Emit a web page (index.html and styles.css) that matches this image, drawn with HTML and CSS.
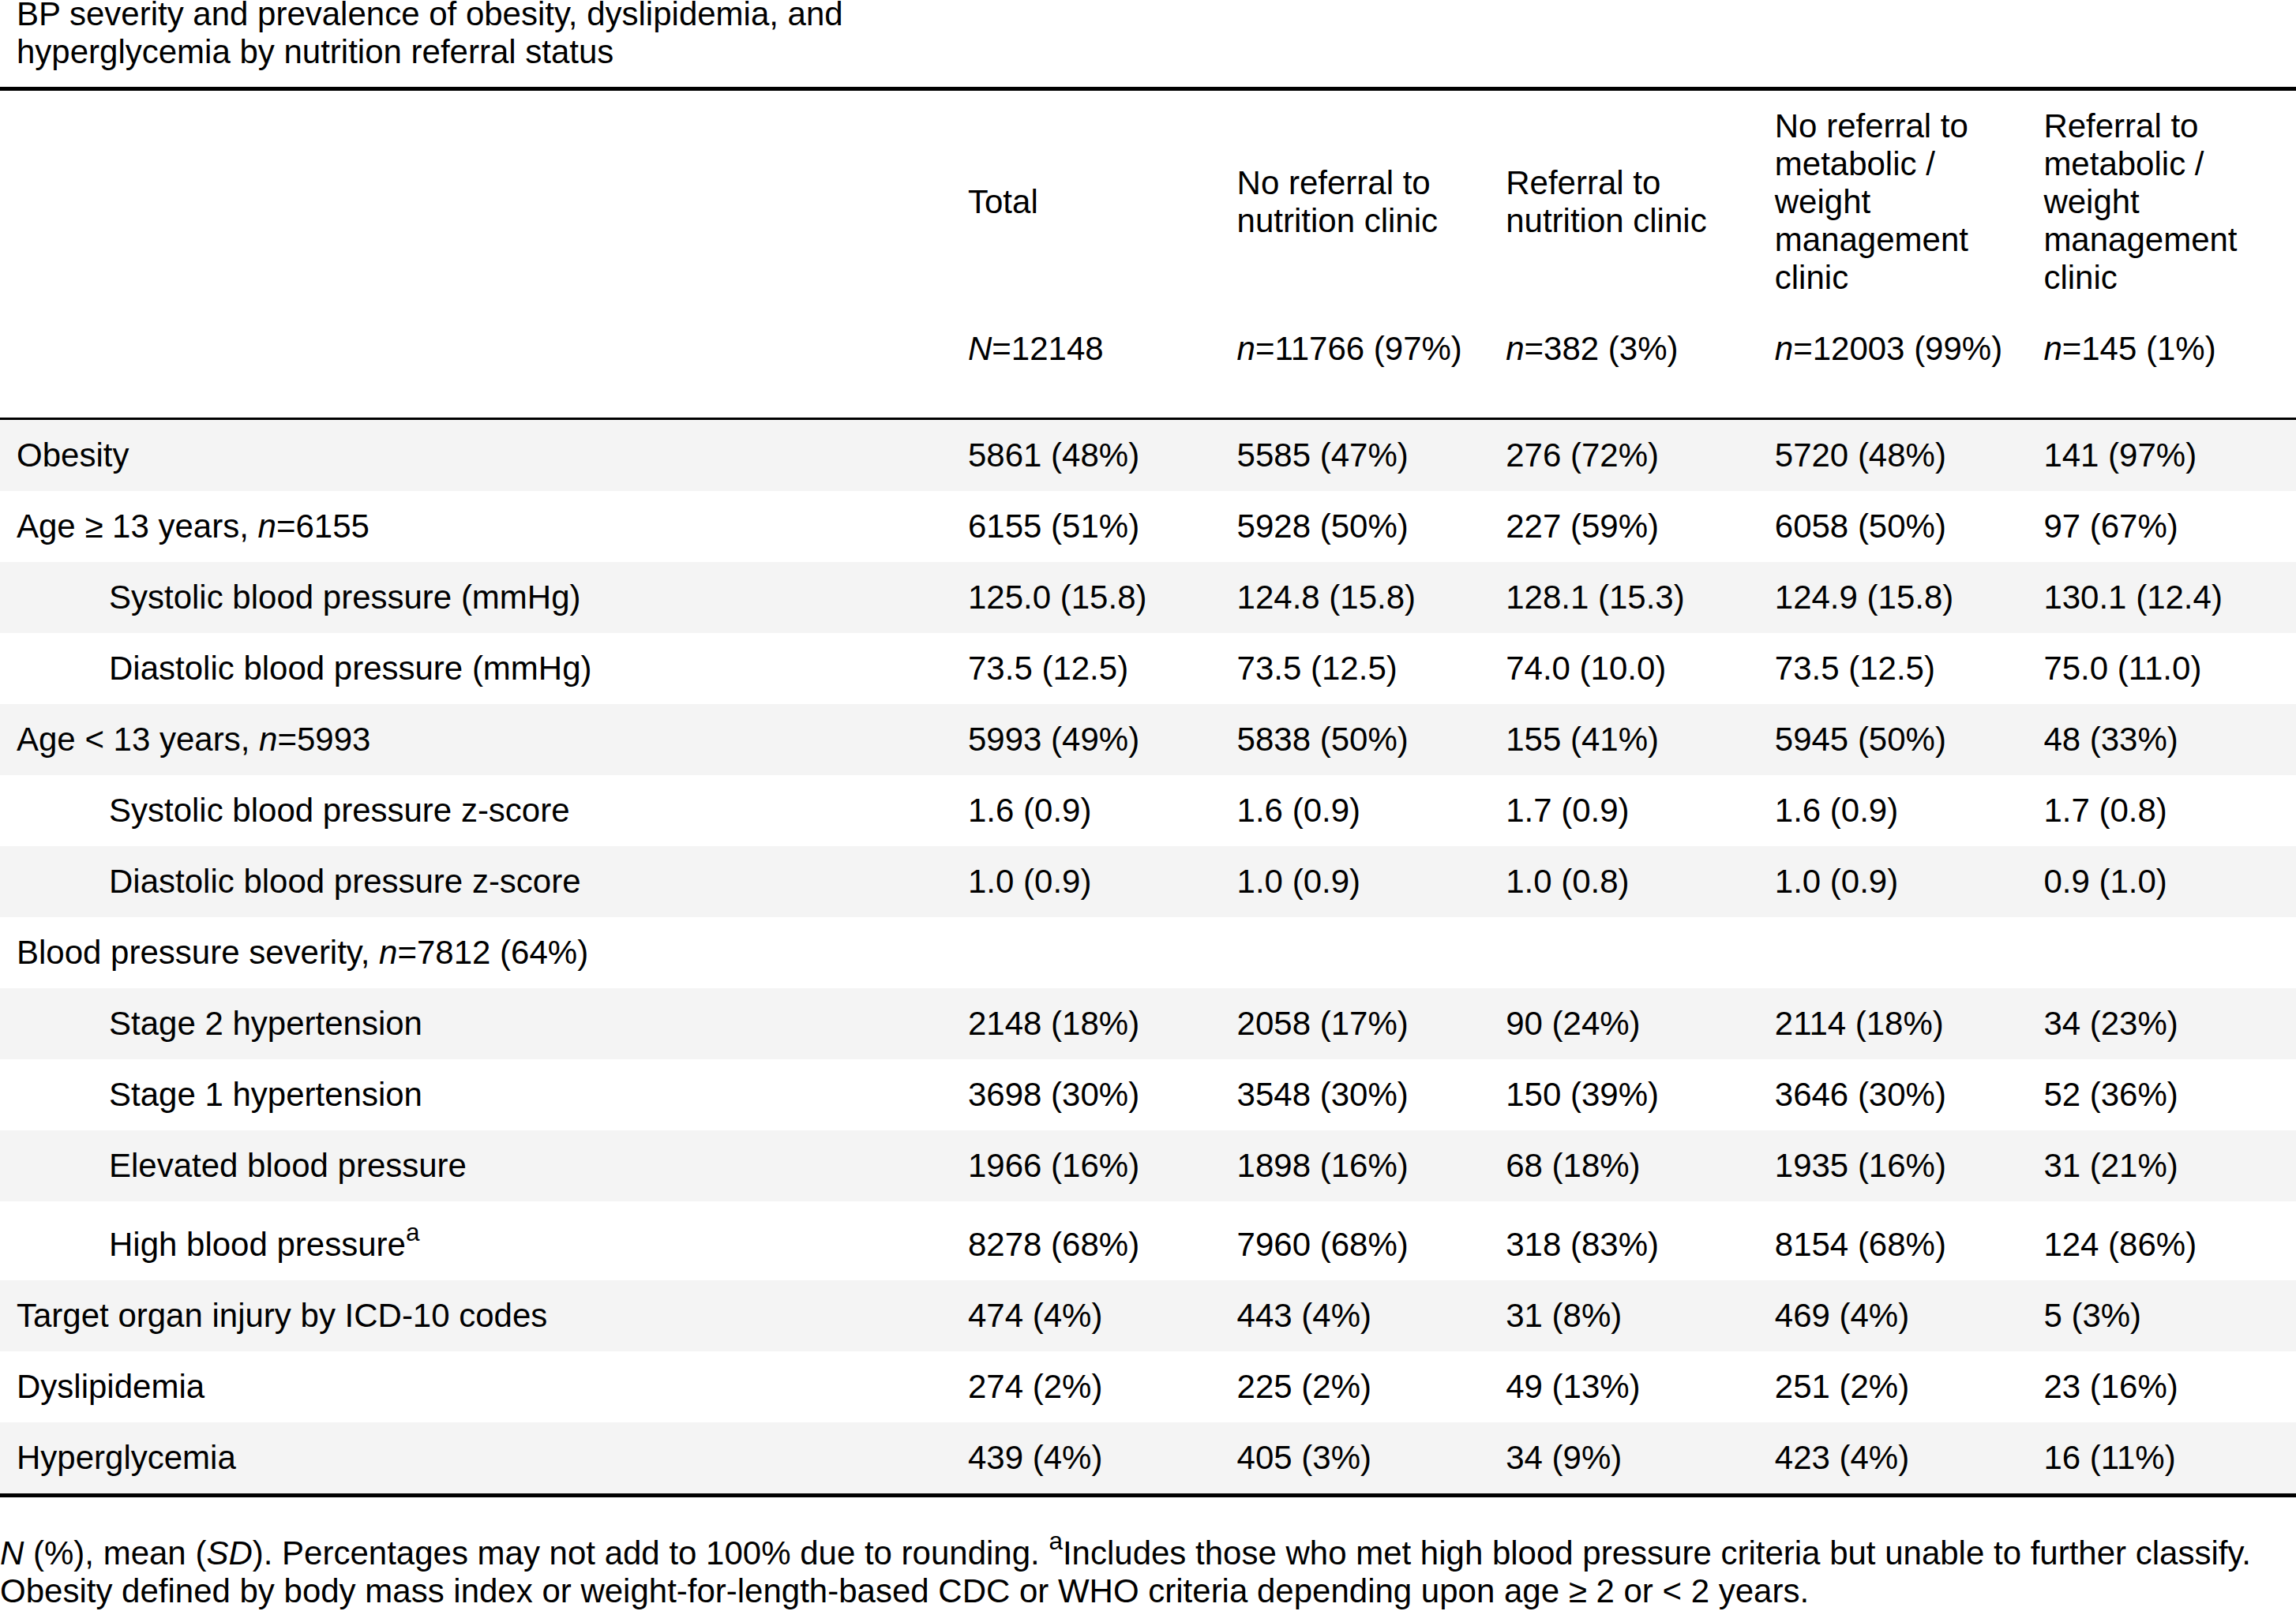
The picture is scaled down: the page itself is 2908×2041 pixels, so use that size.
FILE: index.html
```html
<!DOCTYPE html>
<html lang="en">
<head>
<meta charset="utf-8">
<title>BP severity table</title>
<link rel="stylesheet" href="styles.css">
</head>
<body>
<div class="caption">BP severity and prevalence of obesity, dyslipidemia, and hyperglycemia by nutrition referral status</div>
<table class="data-table">
  <colgroup>
    <col class="col-label">
    <col><col><col><col><col>
  </colgroup>
  <thead>
    <tr class="head-labels">
      <th></th>
      <th>Total</th>
      <th>No referral to nutrition clinic</th>
      <th>Referral to nutrition clinic</th>
      <th>No referral to metabolic / weight management clinic</th>
      <th>Referral to metabolic / weight management clinic</th>
    </tr>
    <tr class="head-counts">
      <th></th>
      <th><i>N</i>=12148</th>
      <th><i>n</i>=11766 (97%)</th>
      <th><i>n</i>=382 (3%)</th>
      <th><i>n</i>=12003 (99%)</th>
      <th><i>n</i>=145 (1%)</th>
    </tr>
  </thead>
  <tbody>
    <tr class="shade"><td>Obesity</td><td>5861 (48%)</td><td>5585 (47%)</td><td>276 (72%)</td><td>5720 (48%)</td><td>141 (97%)</td></tr>
    <tr><td>Age ≥ 13 years, <i>n</i>=6155</td><td>6155 (51%)</td><td>5928 (50%)</td><td>227 (59%)</td><td>6058 (50%)</td><td>97 (67%)</td></tr>
    <tr class="shade"><td class="indent">Systolic blood pressure (mmHg)</td><td>125.0 (15.8)</td><td>124.8 (15.8)</td><td>128.1 (15.3)</td><td>124.9 (15.8)</td><td>130.1 (12.4)</td></tr>
    <tr><td class="indent">Diastolic blood pressure (mmHg)</td><td>73.5 (12.5)</td><td>73.5 (12.5)</td><td>74.0 (10.0)</td><td>73.5 (12.5)</td><td>75.0 (11.0)</td></tr>
    <tr class="shade"><td>Age &lt; 13 years, <i>n</i>=5993</td><td>5993 (49%)</td><td>5838 (50%)</td><td>155 (41%)</td><td>5945 (50%)</td><td>48 (33%)</td></tr>
    <tr><td class="indent">Systolic blood pressure z-score</td><td>1.6 (0.9)</td><td>1.6 (0.9)</td><td>1.7 (0.9)</td><td>1.6 (0.9)</td><td>1.7 (0.8)</td></tr>
    <tr class="shade"><td class="indent">Diastolic blood pressure z-score</td><td>1.0 (0.9)</td><td>1.0 (0.9)</td><td>1.0 (0.8)</td><td>1.0 (0.9)</td><td>0.9 (1.0)</td></tr>
    <tr><td>Blood pressure severity, <i>n</i>=7812 (64%)</td><td></td><td></td><td></td><td></td><td></td></tr>
    <tr class="shade"><td class="indent">Stage 2 hypertension</td><td>2148 (18%)</td><td>2058 (17%)</td><td>90 (24%)</td><td>2114 (18%)</td><td>34 (23%)</td></tr>
    <tr><td class="indent">Stage 1 hypertension</td><td>3698 (30%)</td><td>3548 (30%)</td><td>150 (39%)</td><td>3646 (30%)</td><td>52 (36%)</td></tr>
    <tr class="shade"><td class="indent">Elevated blood pressure</td><td>1966 (16%)</td><td>1898 (16%)</td><td>68 (18%)</td><td>1935 (16%)</td><td>31 (21%)</td></tr>
    <tr class="tall"><td class="indent">High blood pressure<sup>a</sup></td><td>8278 (68%)</td><td>7960 (68%)</td><td>318 (83%)</td><td>8154 (68%)</td><td>124 (86%)</td></tr>
    <tr class="shade"><td>Target organ injury by ICD-10 codes</td><td>474 (4%)</td><td>443 (4%)</td><td>31 (8%)</td><td>469 (4%)</td><td>5 (3%)</td></tr>
    <tr><td>Dyslipidemia</td><td>274 (2%)</td><td>225 (2%)</td><td>49 (13%)</td><td>251 (2%)</td><td>23 (16%)</td></tr>
    <tr class="shade"><td>Hyperglycemia</td><td>439 (4%)</td><td>405 (3%)</td><td>34 (9%)</td><td>423 (4%)</td><td>16 (11%)</td></tr>
  </tbody>
</table>
<p class="footnote"><i>N</i> (%), mean (<i>SD</i>). Percentages may not add to 100% due to rounding. <sup>a</sup>Includes those who met high blood pressure criteria but unable to further classify. Obesity defined by body mass index or weight-for-length-based CDC or WHO criteria depending upon age ≥ 2 or &lt; 2 years.</p>
</body>
</html>
```
FILE: styles.css
```css
html, body {
  margin: 0;
  padding: 0;
  background: #ffffff;
  overflow: hidden;
}

body {
  font-family: "Liberation Sans", Arial, sans-serif;
  font-size: 42px;
  line-height: 48px;
  color: #000000;
  width: 2908px;
}

.caption {
  margin-top: -6px;
  padding: 0 21px 20px 21px;
  width: 1100px;
}

.data-table {
  width: 2908px;
  border-collapse: collapse;
  table-layout: fixed;
  border-top: 5px solid #000000;
  border-bottom: 5px solid #000000;
}

.col-label {
  width: 1205px;
}

.data-table th,
.data-table td {
  padding: 21px;
  text-align: left;
  font-weight: normal;
  vertical-align: middle;
}

.head-counts th {
  padding-bottom: 63px;
  border-bottom: 3px solid #000000;
}

.shade td {
  background: #f4f4f4;
}

.data-table td.indent {
  padding-left: 138px;
}

.tall td {
  padding-top: 31px;
}

sup {
  font-size: 0.75em;
  line-height: 0;
  vertical-align: 0.6em;
}

.footnote {
  margin: 47px 0 0 0;
  padding: 0;
  line-height: normal;
}
```
